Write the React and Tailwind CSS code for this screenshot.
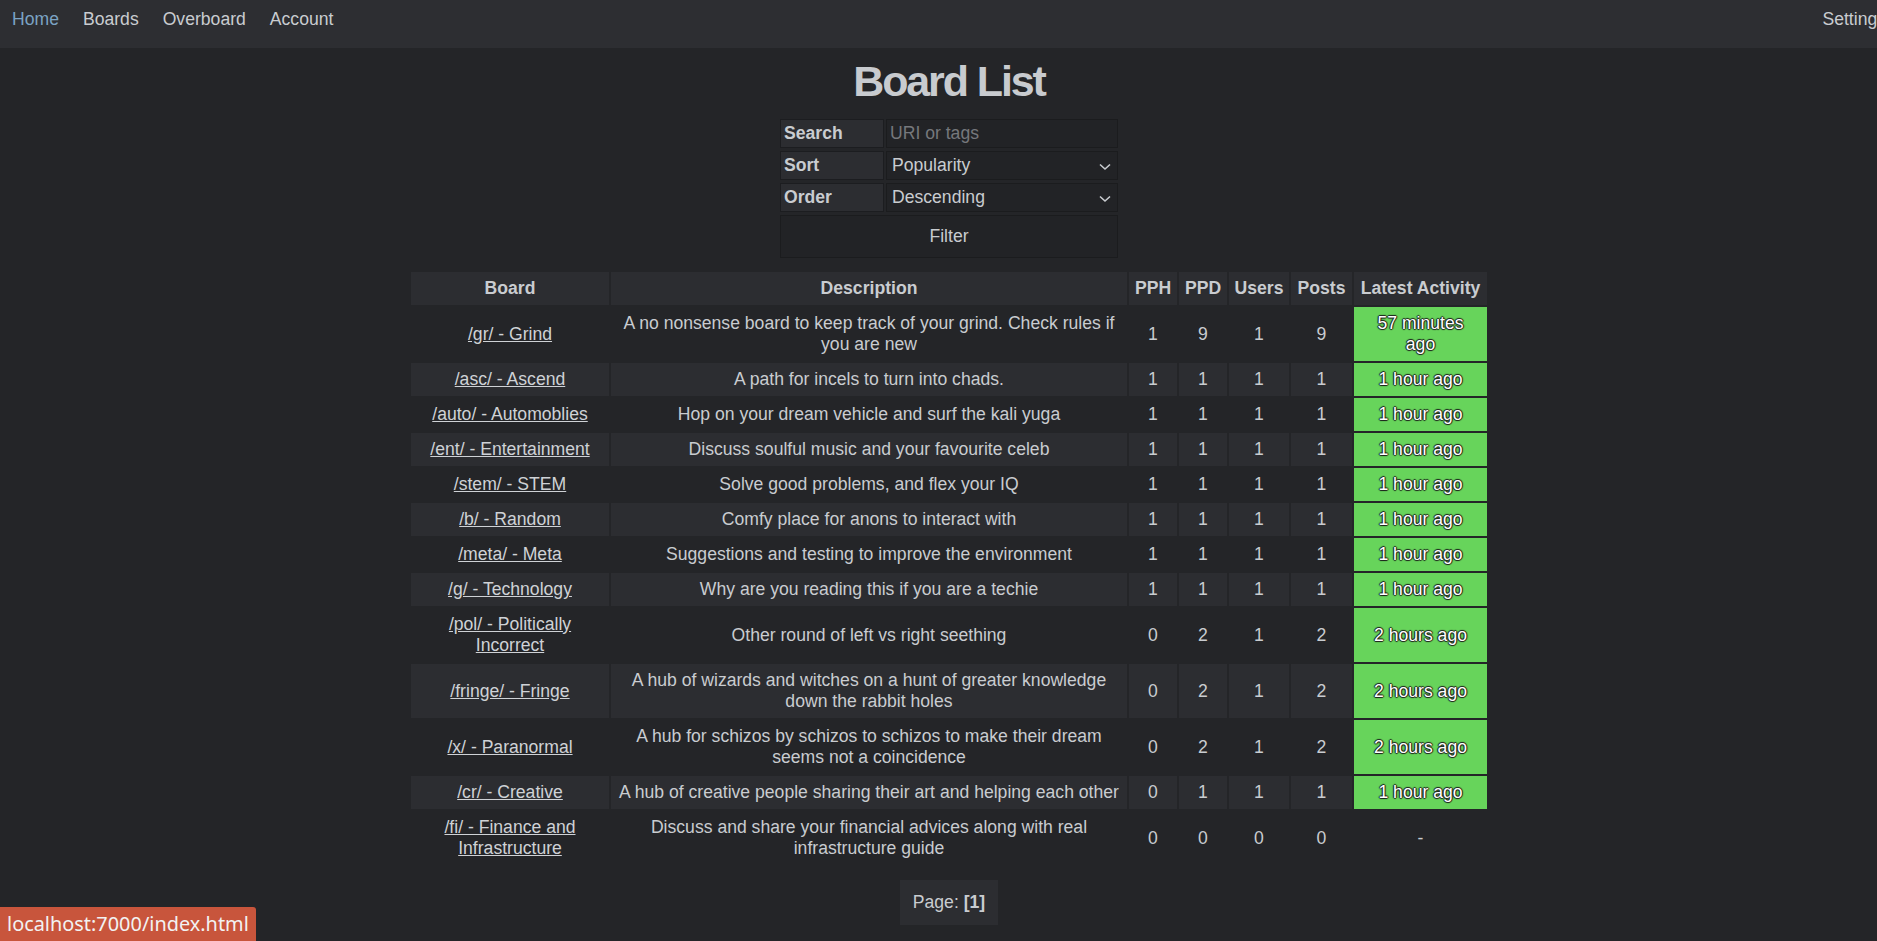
import { useState } from "react";

const boards = [
  ["/gr/ - Grind", "A no nonsense board to keep track of your grind. Check rules if you are new", 1, 9, 1, 9, "57 minutes ago"],
  ["/asc/ - Ascend", "A path for incels to turn into chads.", 1, 1, 1, 1, "1 hour ago"],
  ["/auto/ - Automoblies", "Hop on your dream vehicle and surf the kali yuga", 1, 1, 1, 1, "1 hour ago"],
  ["/ent/ - Entertainment", "Discuss soulful music and your favourite celeb", 1, 1, 1, 1, "1 hour ago"],
  ["/stem/ - STEM", "Solve good problems, and flex your IQ", 1, 1, 1, 1, "1 hour ago"],
  ["/b/ - Random", "Comfy place for anons to interact with", 1, 1, 1, 1, "1 hour ago"],
  ["/meta/ - Meta", "Suggestions and testing to improve the environment", 1, 1, 1, 1, "1 hour ago"],
  ["/g/ - Technology", "Why are you reading this if you are a techie", 1, 1, 1, 1, "1 hour ago"],
  ["/pol/ - Politically Incorrect", "Other round of left vs right seething", 0, 2, 1, 2, "2 hours ago"],
  ["/fringe/ - Fringe", "A hub of wizards and witches on a hunt of greater knowledge down the rabbit holes", 0, 2, 1, 2, "2 hours ago"],
  ["/x/ - Paranormal", "A hub for schizos by schizos to schizos to make their dream seems not a coincidence", 0, 2, 1, 2, "2 hours ago"],
  ["/cr/ - Creative", "A hub of creative people sharing their art and helping each other", 0, 1, 1, 1, "1 hour ago"],
  ["/fi/ - Finance and Infrastructure", "Discuss and share your financial advices along with real infrastructure guide", 0, 0, 0, 0, null],
];

const Chevron = () => (
  <svg width="12" height="8" viewBox="0 0 12 8" fill="none" stroke="#c9ccd0" strokeWidth="1.6" className="pointer-events-none absolute right-[6px] top-[11px]">
    <polyline points="1,1.5 6,6 11,1.5" />
  </svg>
);

const App = () => {
  const [search, setSearch] = useState("");

  return (
    <div className="min-h-screen w-full overflow-hidden bg-[#242528] font-['Liberation_Sans',Arial,sans-serif] text-[17.6px] text-[#c9ccd0]">
      <div className="w-[1898px]">
        {/* Nav */}
        <nav className="flex h-[48px] items-start justify-between bg-[#2d2e32] pt-[9px] leading-[20px]">
          <div className="flex">
            <a className="px-[12px] text-[#7ba3c4]">Home</a>
            <a className="px-[12px]">Boards</a>
            <a className="px-[12px]">Overboard</a>
            <a className="px-[12px]">Account</a>
          </div>
          <a className="px-[12px]">Settings</a>
        </nav>

        <main className="flex flex-col items-center">
          <h1 className="mt-[9px] text-[43px] font-bold leading-[49px] tracking-[-2.1px] text-[#c8cbcf]">
            Board List
          </h1>

          {/* Filter form */}
          <form className="mt-[13px] grid w-[338px] grid-cols-[104px_232px] gap-x-[2px] gap-y-[3px]">
            <label className="h-[29px] border border-[#1c1d20] bg-[#2c2d31] px-[3px] font-bold leading-[27px]">Search</label>
            <input
              value={search}
              onChange={(e) => setSearch(e.target.value)}
              placeholder="URI or tags"
              className="h-[29px] border border-[#1b1c1e] bg-[#222326] px-[3px] text-[#c9ccd0] outline-none placeholder:text-[#76787c]"
            />
            <label className="h-[29px] border border-[#1c1d20] bg-[#2c2d31] px-[3px] font-bold leading-[27px]">Sort</label>
            <div className="relative h-[29px] border border-[#1b1c1e] bg-[#222326] px-[5px] leading-[27px]">
              Popularity
              <Chevron />
            </div>
            <label className="h-[29px] border border-[#1c1d20] bg-[#2c2d31] px-[3px] font-bold leading-[27px]">Order</label>
            <div className="relative h-[29px] border border-[#1b1c1e] bg-[#222326] px-[5px] leading-[27px]">
              Descending
              <Chevron />
            </div>
            <button type="button" className="col-span-2 h-[43px] border border-[#1b1c1e] bg-[#222326] text-[#c9ccd0]">
              Filter
            </button>
          </form>

          {/* Board table */}
          <table className="mt-[12px] table-fixed border-separate border-spacing-[2px] leading-[21px]">
            <thead>
              <tr className="bg-[#2c2d31] font-bold">
                <th className="w-[198px] px-2 py-[6px]">Board</th>
                <th className="w-[516px] px-2 py-[6px]">Description</th>
                <th className="w-[48px] px-0 py-[6px]">PPH</th>
                <th className="w-[48px] px-0 py-[6px]">PPD</th>
                <th className="w-[60px] px-0 py-[6px]">Users</th>
                <th className="w-[61px] px-0 py-[6px]">Posts</th>
                <th className="w-[133px] px-0 py-[6px]">Latest Activity</th>
              </tr>
            </thead>
            <tbody>
              {boards.map(([name, desc, pph, ppd, users, posts, latest], i) => (
                <tr key={name} className={i % 2 === 1 ? "bg-[#2c2d31]" : ""}>
                  <td className="px-2 py-[6px] text-center">
                    <a className="cursor-pointer text-[#cfd2d6] underline">{name}</a>
                  </td>
                  <td className="px-[6px] py-[6px] text-center">{desc}</td>
                  <td className="py-[6px] text-center">{pph}</td>
                  <td className="py-[6px] text-center">{ppd}</td>
                  <td className="py-[6px] text-center">{users}</td>
                  <td className="py-[6px] text-center">{posts}</td>
                  {latest ? (
                    <td className="bg-[#67d45b] px-2 py-[6px] text-center text-white [text-shadow:-1px_0_1px_#1a1a1a,1px_0_1px_#1a1a1a,0_-1px_1px_#1a1a1a,0_1px_1px_#1a1a1a]">
                      {latest}
                    </td>
                  ) : (
                    <td className="px-2 py-[6px] text-center">-</td>
                  )}
                </tr>
              ))}
            </tbody>
          </table>

          {/* Pagination */}
          <div className="mt-[13px] bg-[#2c2d31] px-[13px] py-[12px] leading-[21px]">
            Page: <b>[1]</b>
          </div>
        </main>
      </div>

      {/* Link status bubble */}
      <div className="fixed bottom-0 left-0 rounded-tr-[3px] bg-[#c8553c] px-[7px] py-[4px] font-['Noto_Sans',sans-serif] text-[19.9px] leading-[26px] text-[#f2f2f2]">
        localhost:7000/index.html
      </div>
    </div>
  );
};

export default App;
